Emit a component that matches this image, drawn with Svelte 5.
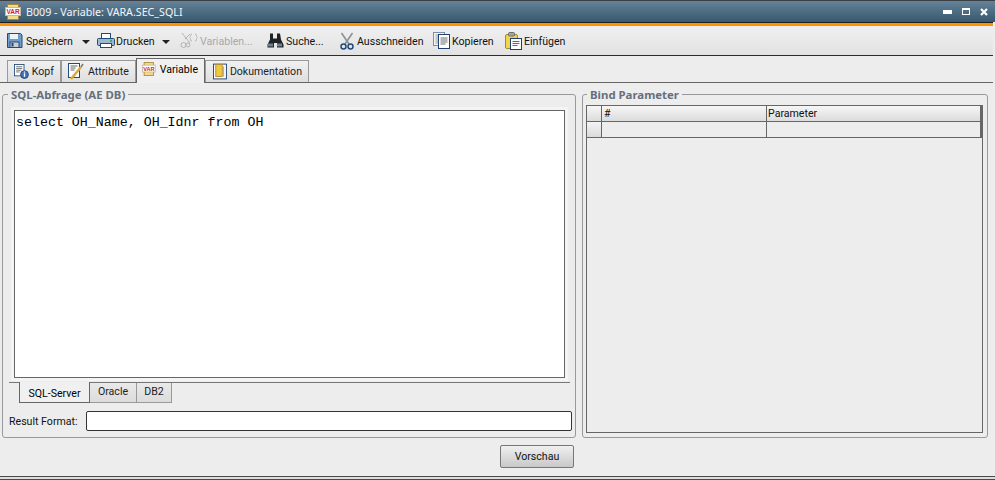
<script lang="ts">
  const werkzeuge = [
    { id: "save", text: "Speichern", menu: true },
    { id: "print", text: "Drucken", menu: true },
    { id: "vars", text: "Variablen...", off: true },
    { id: "find", text: "Suche..." },
    { id: "cut", text: "Ausschneiden" },
    { id: "copy", text: "Kopieren" },
    { id: "paste", text: "Einfügen" }
  ];
  const reiter = [
    { id: "kopf", text: "Kopf" },
    { id: "attr", text: "Attribute" },
    { id: "var", text: "Variable", aktiv: true },
    { id: "doku", text: "Dokumentation" }
  ];
</script>

{#snippet varIcon()}
  <svg width="16" height="16" viewBox="0 0 16 16">
    <rect x="2.500" y="0.500" width="11" height="15" fill="#f3d98a" stroke="#a8873a" />
    <rect x="0.500" y="3.500" width="15" height="8" fill="#fff" stroke="#c9b5a5" />
    <text x="8" y="10.200" text-anchor="middle" class="vartext">VAR</text>
  </svg>
{/snippet}

{#snippet icon(id)}
  {#if id === "save"}
    <svg width="17" height="17" viewBox="0 0 17 17">
      <path d="M1.500 1.500h13l1.500 1.500v12.500h-14.500z" fill="#6f9bc9" stroke="#234a7c" />
      <rect x="4" y="2" width="8" height="5" fill="#eef3f8" />
      <rect x="4" y="10" width="9" height="5.500" fill="#c9ced4" stroke="#234a7c" />
      <rect x="5.500" y="11" width="2" height="3.500" fill="#234a7c" />
    </svg>
  {:else if id === "print"}
    <svg width="18" height="17" viewBox="0 0 18 17">
      <rect x="4.500" y="1.500" width="9" height="6" fill="#fff" stroke="#234a7c" />
      <rect x="0.500" y="6.500" width="17" height="7" rx="1" fill="#9fb6cf" stroke="#234a7c" />
      <rect x="3.500" y="11.500" width="11" height="4" fill="#fff" stroke="#234a7c" />
      <rect x="13" y="8" width="2" height="2" fill="#35b35a" />
    </svg>
  {:else if id === "vars"}
    <svg width="18" height="17" viewBox="0 0 18 17" fill="none" stroke="#b4b4b4">
      <path d="M2 1l8 10M10 2l-5 5" />
      <circle cx="3.500" cy="13" r="2.500" />
      <circle cx="8" cy="13" r="2" />
      <path d="M12 2q-1.500 0-1.500 1.500v1l-1 1 1 1v1q0 1.500 1.500 1.500M15 2q1.500 0 1.500 1.500v1l1 1-1 1v1q0 1.500-1.500 1.500" />
    </svg>
  {:else if id === "find"}
    <svg width="18" height="17" viewBox="0 0 18 17">
      <path d="M4 1.500h3v5h4v-5h3l1 6 2.500 5v3h-6.500v-4.500h-3v4.500h-6.500v-3l2.500-5z" fill="#1f2326" />
      <rect x="2" y="11.500" width="5" height="3" fill="#6e7f92" />
      <rect x="11" y="11.500" width="5" height="3" fill="#6e7f92" />
    </svg>
  {:else if id === "cut"}
    <svg width="16" height="18" viewBox="0 0 16 18" fill="none">
      <path d="M2.500 1l7.500 11M13.500 1l-7.500 11" stroke="#8d9297" stroke-width="1.600" />
      <circle cx="4.500" cy="14.500" r="2.500" stroke="#234a7c" stroke-width="1.500" />
      <circle cx="11.500" cy="14.500" r="2.500" stroke="#234a7c" stroke-width="1.500" />
    </svg>
  {:else if id === "copy"}
    <svg width="17" height="17" viewBox="0 0 17 17">
      <rect x="0.500" y="0.500" width="11" height="13" fill="#f2f2f2" stroke="#7d8ea3" />
      <path d="M2.500 3h7M2.500 5h7M2.500 7h7M2.500 9h7M2.500 11h7" stroke="#9b9b9b" />
      <rect x="5.500" y="2.500" width="11" height="14" fill="#fff" stroke="#1f3f74" />
      <path d="M7.500 6h7M7.500 8h7M7.500 10h7M7.500 12h5" stroke="#6a6a6a" />
    </svg>
  {:else if id === "paste"}
    <svg width="17" height="18" viewBox="0 0 17 18">
      <rect x="0.500" y="2.500" width="12" height="14" rx="1.500" fill="#f1d34e" stroke="#a9892f" />
      <rect x="3.500" y="0.500" width="6" height="3.500" rx="1" fill="#a5a5a5" stroke="#6c6c6c" />
      <rect x="5.500" y="6.500" width="11" height="11" fill="#fff" stroke="#1f3f74" />
      <path d="M7.500 9.500h7M7.500 11.500h7M7.500 13.500h5" stroke="#6a6a6a" />
    </svg>
  {:else if id === "kopf"}
    <svg width="17" height="17" viewBox="0 0 17 17">
      <rect x="0.500" y="0.500" width="11" height="13" fill="#fff" stroke="#234a7c" />
      <path d="M2.500 3h7M2.500 5h7M2.500 7h6M2.500 9h4" stroke="#666" />
      <circle cx="12" cy="12" r="4.500" fill="#3f71b5" stroke="#1f3f74" />
      <rect x="11.300" y="10.500" width="1.500" height="4" fill="#fff" />
      <rect x="11.300" y="8.500" width="1.500" height="1.300" fill="#fff" />
    </svg>
  {:else if id === "attr"}
    <svg width="17" height="17" viewBox="0 0 17 17">
      <rect x="0.500" y="0.500" width="11" height="14" fill="#fff" stroke="#234a7c" />
      <path d="M2.500 3h7M2.500 5h5M2.500 7h4" stroke="#666" />
      <path d="M3 16l10-12" stroke="#d9a93a" stroke-width="2.500" />
      <path d="M13 4l2-3" stroke="#777" stroke-width="1.500" />
    </svg>
  {:else if id === "var"}
    {@render varIcon()}
  {:else if id === "doku"}
    <svg width="15" height="17" viewBox="0 0 15 17">
      <rect x="0.500" y="0.500" width="14" height="16" fill="#fff" stroke="#1f3f74" />
      <rect x="3" y="1" width="7" height="13" fill="#f0c93f" stroke="#b18d2a" />
      <path d="M11.500 3v11" stroke="#8fa3bd" />
    </svg>
  {/if}
{/snippet}

<div class="fenster">
  <header class="titel">
    <span class="titelicon">{@render varIcon()}</span>
    <span class="titeltext">B009 - Variable: VARA.SEC_SQLI</span>
    <div class="knoepfe">
      <svg width="9" height="4" viewBox="0 0 9 4"><rect width="9" height="4" fill="#fff" /></svg>
      <svg width="8" height="7" viewBox="0 0 8 7" fill="none"><rect x="0.500" y="1" width="7" height="5.500" stroke="#fff" /><rect width="8" height="2" fill="#fff" /></svg>
      <svg width="8" height="8" viewBox="0 0 8 8"><path d="M1 1l6 6M7 1l-6 6" stroke="#fff" stroke-width="2.200" /></svg>
    </div>
  </header>
  <div class="akzent"></div>

  <nav class="werkzeuge">
    {#each werkzeuge as w}
      <span class="tool {w.id}" class:off={w.off}>
        {@render icon(w.id)}
        <span class="tooltext">{w.text}</span>
        {#if w.menu}<i class="pfeil"></i>{/if}
      </span>
    {/each}
  </nav>

  <div class="reiter">
    {#each reiter as r}
      <span class="tab {r.id}" class:aktiv={r.aktiv}>
        {@render icon(r.id)}
        <span>{r.text}</span>
      </span>
    {/each}
  </div>

  <main class="inhalt">
    <div class="spalten">
      <fieldset class="gruppe links">
        <legend>SQL-Abfrage (AE DB)</legend>
        <div class="editor">select OH_Name, OH_Idnr from OH</div>
        <div class="subtabs">
          <span class="sub aktiv">SQL-Server</span>
          <span class="sub oracle">Oracle</span>
          <span class="sub db2">DB2</span>
        </div>
        <div class="format">
          <span class="label">Result Format:</span>
          <div class="eingabe"></div>
        </div>
      </fieldset>

      <fieldset class="gruppe rechts">
        <legend>Bind Parameter</legend>
        <div class="rahmen">
          <div class="zeile kopfzeile">
            <span class="c0"></span>
            <span class="c1">#</span>
            <span class="c2">Parameter</span>
          </div>
          <div class="zeile">
            <span class="c0 griff"></span>
            <span class="c1"></span>
            <span class="c2"></span>
          </div>
        </div>
      </fieldset>
    </div>
    <div class="aktion">
      <button type="button">Vorschau</button>
    </div>
  </main>
  <div class="fuss"></div>
</div>

<style>
  :global(body) {
    margin: 0;
    background: #ededed;
  }
  .fenster {
    width: 995px;
    height: 480px;
    overflow: hidden;
    display: flex;
    flex-direction: column;
    box-sizing: border-box;
    font-family: Roboto, "Noto Sans", sans-serif;
    font-size: 10.600px;
    color: #111;
    background: #ededed;
  }
  .titel {
    height: 22px;
    flex: none;
    box-sizing: border-box;
    display: flex;
    align-items: center;
    padding: 0 7px 0 5px;
    border-top: 1px solid #3a3f44;
    background: linear-gradient(#648298, #38586f);
    color: #fff;
  }
  .titelicon {
    display: flex;
    margin-right: 5px;
  }
  .titeltext {
    flex: 1;
    font-family: "Noto Sans", sans-serif;
    font-size: 10.700px;
    color: #f4f6f8;
  }
  .knoepfe {
    display: flex;
    align-items: center;
    gap: 10px;
  }
  .vartext {
    font-family: "Liberation Sans", sans-serif;
    font-size: 6.500px;
    font-weight: 700;
    fill: #c8261d;
  }
  .akzent {
    height: 4px;
    flex: none;
    box-sizing: border-box;
    margin-right: 2px;
    border-top: 1px solid #1d1d1d;
    background: #ff9000;
  }
  .werkzeuge {
    height: 30px;
    flex: none;
    box-sizing: border-box;
    display: flex;
    align-items: center;
    padding-left: 6px;
    margin-right: 2px;
    border-bottom: 1px solid #2c2c2c;
    background: linear-gradient(#f0f0f0, #e2e2e2);
  }
  .tool {
    display: flex;
    align-items: center;
    gap: 2px;
  }
  .tooltext {
    padding-top: 2px;
  }
  .save { width: 91px; gap: 3px; }
  .print { width: 83px; gap: 1px; }
  .vars { width: 86px; }
  .find { width: 73px; }
  .cut { width: 94px; }
  .copy { width: 72px; }
  .off {
    color: #a8a8a8;
  }
  .pfeil {
    width: 0;
    height: 0;
    margin-left: 6px;
    margin-top: 2px;
    border: 4px solid transparent;
    border-top: 4px solid #222;
    border-bottom: 0;
  }
  .reiter {
    height: 27px;
    flex: none;
    box-sizing: border-box;
    display: flex;
    align-items: flex-end;
    padding-left: 7px;
    margin-right: 2px;
    border-bottom: 1px solid #666;
  }
  .tab {
    height: 22px;
    box-sizing: border-box;
    display: flex;
    align-items: center;
    gap: 3px;
    padding: 0 6px;
    border: 1px solid #999;
    border-bottom: 0;
    background: linear-gradient(#f1f1f1, #dedede);
    color: #222;
  }
  .tab.kopf { width: 54px; }
  .tab.attr { width: 75px; }
  .tab.var { width: 69px; gap: 4px; padding-left: 5px; }
  .tab.doku { width: 104px; padding-left: 7px; }
  .tab.aktiv {
    height: 25px;
    margin-bottom: -1px;
    border-color: #666;
    background: #f0f0f0;
    padding-bottom: 4px;
    color: #000;
  }
  .inhalt {
    flex: 1;
    min-height: 0;
    display: flex;
    flex-direction: column;
    padding: 3px 6px 0 2px;
    background: #ededed;
  }
  .spalten {
    display: flex;
    gap: 6px;
  }
  .gruppe {
    margin: 0;
    height: 352px;
    box-sizing: border-box;
    border: 1px solid #999;
    border-radius: 3px;
  }
  .links {
    width: 574px;
    padding: 8px 2px 0 6px;
    min-width: 0;
  }
  .rechts {
    width: 406px;
    padding: 3px 4px 0 3px;
    min-width: 0;
  }
  legend {
    padding: 2px 3px 0;
    font-family: "Noto Sans", sans-serif;
    font-size: 11.400px;
    font-weight: 700;
    line-height: 14px;
    color: #666f7c;
  }
  .links legend {
    margin-left: -1px;
  }
  .rechts legend {
    margin-left: 1px;
  }
  .editor {
    width: 551px;
    height: 268px;
    box-sizing: border-box;
    margin-left: 5px;
    padding: 4px 1px;
    border: 1px solid #666;
    outline: 3px solid #f4f4f4;
    background: #fff;
    font-family: "Liberation Mono", monospace;
    font-size: 13.300px;
    line-height: 16px;
    color: #000;
  }
  .subtabs {
    display: flex;
    align-items: flex-start;
    margin-top: 4px;
    width: 561px;
    padding-left: 10px;
    box-sizing: border-box;
    border-top: 1px solid #777;
    height: 26px;
  }
  .sub {
    height: 20px;
    box-sizing: border-box;
    line-height: 18px;
    text-align: center;
    border: 1px solid #999;
    border-top: 0;
    border-left: 0;
    background: linear-gradient(#e9e9e9, #dcdcdc);
    color: #222;
  }
  .oracle { width: 47px; }
  .db2 { width: 35px; }
  .sub.aktiv {
    width: 71px;
    margin-top: -1px;
    height: 21px;
    line-height: 23px;
    border-color: #666;
    border-left: 1px solid #666;
    background: #f0f0f0;
    color: #000;
  }
  .format {
    display: flex;
    align-items: center;
    height: 20px;
    margin-top: 3px;
    color: #111;
  }
  .label {
    flex: none;
    width: 77px;
    white-space: nowrap;
  }
  .eingabe {
    width: 486px;
    height: 20px;
    box-sizing: border-box;
    border: 1px solid #333;
    border-radius: 2px;
    background: #fff;
  }
  .rahmen {
    height: 328px;
    box-sizing: border-box;
    border: 1px solid #666;
    border-top: 0;
  }
  .zeile {
    display: flex;
    height: 16px;
    box-sizing: border-box;
    border-bottom: 1px solid #666;
    border-right: 2px solid #666;
  }
  .zeile.kopfzeile {
    height: 17px;
    border-top: 1px solid #666;
    background: linear-gradient(#f6f6f6, #dcdcdc);
  }
  .zeile span {
    box-sizing: border-box;
    line-height: 15px;
  }
  .c0 {
    width: 15px;
    border-right: 1px solid #666;
  }
  .c1 {
    width: 165px;
    padding-left: 2px;
    border-right: 1px solid #666;
  }
  .c2 {
    flex: 1;
    padding-left: 1px;
  }
  .griff {
    background: linear-gradient(#f4f4f4, #dadada);
  }
  .aktion {
    display: flex;
    justify-content: flex-end;
    margin-top: 7px;
    padding-right: 415px;
  }
  button {
    width: 74px;
    height: 23px;
    padding: 0;
    border: 1px solid #777;
    border-radius: 2px;
    background: linear-gradient(#f0f0f0, #c8c8c8);
    font: inherit;
    color: #111;
  }
  .fuss {
    height: 4px;
    flex: none;
    box-sizing: border-box;
    border-top: 1px solid #4a4a4a;
    border-bottom: 1px solid #4a4a4a;
    background: #ddd;
  }
</style>
